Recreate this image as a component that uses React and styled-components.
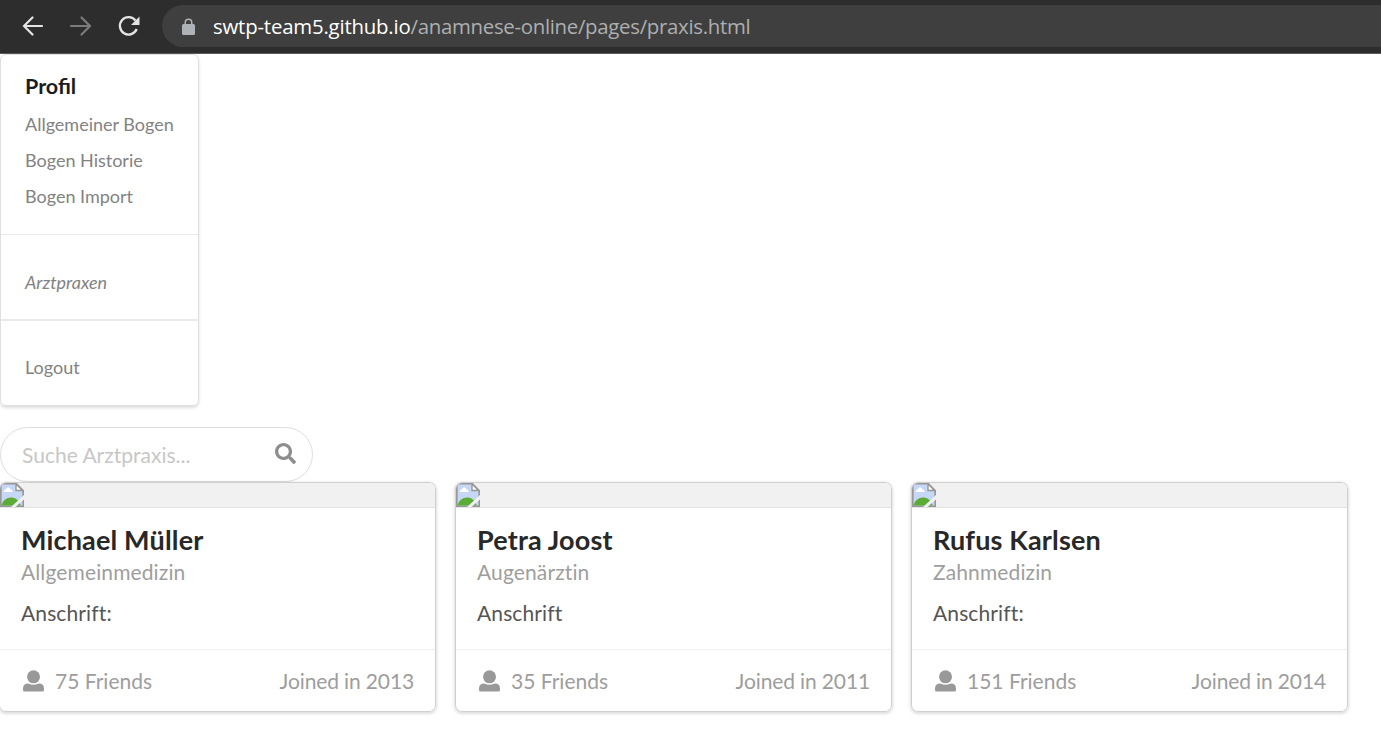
import React from 'react';
import styled, { createGlobalStyle } from 'styled-components';

const GlobalStyle = createGlobalStyle`
  *, *::before, *::after { box-sizing: border-box; }
  html, body { margin: 0; background: #fff; }
  body {
    min-height: 100vh;
    font-family: Lato, "Liberation Sans", sans-serif;
    font-size: 21px;
    color: rgba(0, 0, 0, 0.87);
  }
`;

const Toolbar = styled.header`
  display: flex;
  align-items: center;
  height: 54px;
  padding: 0 0 1px 20px;
  background: #2d2d2d;
  border-bottom: 1px solid #5a5a5a;
`;

const NavIcon = styled.svg`
  flex: none;
  width: 24px;
  height: 24px;
  margin-right: 24px;
  color: ${(p) => (p.$dim ? '#7b7b7b' : '#e4e4e4')};
`;

const AddressBar = styled.div`
  flex: 1;
  display: flex;
  align-items: center;
  height: 42px;
  margin-left: -2px;
  padding-left: 20px;
  border-radius: 21px 0 0 21px;
  background: #3f3f3f;
`;

const Lock = styled.svg`
  flex: none;
  width: 13px;
  height: 17px;
  margin-right: 18px;
  fill: #aeb1b6;
`;

const Url = styled.span`
  font: 20.4px/28px "Open Sans", "Noto Sans", sans-serif;
  letter-spacing: ${(p) => p.$spacing}px;
  color: ${(p) => (p.$path ? '#adafb1' : '#fff')};
  white-space: pre;
`;

const Menu = styled.nav`
  width: 199px;
  height: 352px;
  border: 1px solid #dedfdf;
  border-radius: 6px;
  box-shadow: 0 2px 3px rgba(34, 36, 38, 0.15);
`;

const MenuGroup = styled.div`
  display: flex;
  flex-direction: column;
  height: ${(p) => p.$height}px;
  padding: ${(p) => p.$top}px 24px 0;
  border-bottom: ${(p) => p.$line || 0}px solid #e9e9e9;
`;

const MenuTitle = styled.div`
  font-size: 21.5px;
  font-weight: 700;
  line-height: 26px;
  margin-bottom: 7px;
  color: #1b1c1d;
`;

const MenuLink = styled.a`
  font-size: 18px;
  line-height: 36px;
  color: #828282;
  font-style: ${(p) => (p.$italic ? 'italic' : 'normal')};
  white-space: nowrap;
`;

const Search = styled.label`
  display: flex;
  align-items: center;
  justify-content: space-between;
  width: 313px;
  height: 55px;
  margin-top: 21px;
  padding: 0 16.5px 0 21px;
  border: 1px solid #dedede;
  border-radius: 28px;
`;

const Placeholder = styled.span`
  color: #c7c7c7;
  line-height: 26px;
`;

const SearchGlyph = styled.svg`
  width: 21px;
  height: 21px;
  margin-bottom: 2px;
  fill: #8e8e8e;
`;

const Cards = styled.main`
  display: flex;
  gap: 19px;
  margin-left: -1px;
  padding-bottom: 20px;
  font-variant-ligatures: none;
`;

const Card = styled.article`
  flex: none;
  width: 437px;
  height: 230px;
  border: 1px solid #d0d0d1;
  border-radius: 7px;
  box-shadow: 0 1px 3px 1px rgba(0, 0, 0, 0.13);
  overflow: hidden;
`;

const CardImage = styled.div`
  height: 25px;
  background: #f1f1f1;
  border-bottom: 1px solid #e3e3e3;
`;

const BrokenImage = styled.svg`
  display: block;
  width: 24px;
  height: 24px;
`;

const CardBody = styled.div`
  height: 142px;
  padding: 17px 21px 0;
  border-bottom: 1px solid #efefef;
`;

const Name = styled.h2`
  margin: 0;
  font-size: 27px;
  font-weight: 700;
  line-height: 30px;
  letter-spacing: 0.16px;
  color: #282828;
`;

const Meta = styled.div`
  margin-top: 1px;
  line-height: 32px;
  letter-spacing: 0.12px;
  color: #9e9e9e;
`;

const Description = styled.div`
  margin-top: 9px;
  line-height: 32px;
  letter-spacing: 0.12px;
  color: #555;
`;

const CardExtra = styled.div`
  display: flex;
  align-items: center;
  justify-content: space-between;
  height: 60px;
  padding: 0 21px;
  color: #9d9d9d;
`;

const Friends = styled.span`
  display: flex;
  align-items: center;
  gap: 11px;
`;

const Joined = styled.span`
  letter-spacing: -0.13px;
`;

const UserGlyph = styled.svg`
  width: 21px;
  height: 22px;
  margin: 1px 0 0 2px;
  fill: #999;
`;

const practices = [
  { name: 'Michael Müller', field: 'Allgemeinmedizin', address: 'Anschrift:', friends: 75, year: 2013 },
  { name: 'Petra Joost', field: 'Augenärztin', address: 'Anschrift', friends: 35, year: 2011 },
  { name: 'Rufus Karlsen', field: 'Zahnmedizin', address: 'Anschrift:', friends: 151, year: 2014 },
];

function ArrowIcon({ right }) {
  return (
    <NavIcon $dim={right} viewBox="0 0 24 24" fill="none" stroke="currentColor" strokeWidth="2.2" strokeLinecap="round">
      <path d={right ? 'M3 12H21.500M13.500 3.500l8.500 8.500-8.500 8.500' : 'M22 12H4M12.500 3.500L4 12l8.500 8.500'} />
    </NavIcon>
  );
}

function ReloadIcon() {
  return (
    <NavIcon viewBox="0 0 24 24">
      <path d="M19.500 6.500A8.700 8.700 0 1 0 20.700 15" fill="none" stroke="currentColor" strokeWidth="2.3" />
      <path d="M23.500 2.500v8.500H15z" fill="currentColor" />
    </NavIcon>
  );
}

function PracticeCard({ name, field, address, friends, year }) {
  return (
    <Card>
      <CardImage>
        <BrokenImage viewBox="0 0 24 24">
          <path d="M.8 .8h15.700l6.700 6.700v15.700H.8z" fill="#c6d6f5" stroke="#979797" strokeWidth="1.6" />
          <path d="M3.500 9c0-2 1.500-2.500 2.500-2.500C6.500 3.500 10 3.500 10.500 6.500c1.500 0 2 1 2 2.500z" fill="#fff" />
          <path d="M1.600 22.500c2-10 16-11 19 0z" fill="#5aac35" />
          <path d="M16 1v6.500h6.500z" fill="#fff" stroke="#979797" strokeWidth="1.4" />
          <path d="M24 12v4.500L15.500 24H11z" fill="#f1f1f1" />
        </BrokenImage>
      </CardImage>
      <CardBody>
        <Name>{name}</Name>
        <Meta>{field}</Meta>
        <Description>{address}</Description>
      </CardBody>
      <CardExtra>
        <Friends>
          <UserGlyph viewBox="0 0 21 22">
            <circle cx="10.500" cy="6.800" r="6.500" />
            <path d="M5.500 13.500Q10.500 16 15.500 13.500Q21 13.500 21 18.500V20Q21 21.500 19.500 21.500H1.500Q0 21.500 0 20V18.500Q0 13.500 5.500 13.500Z" />
          </UserGlyph>
          <span>{friends} Friends</span>
        </Friends>
        <Joined>Joined in {year}</Joined>
      </CardExtra>
    </Card>
  );
}

export default function App() {
  return (
    <>
      <GlobalStyle />
      <Toolbar>
        <ArrowIcon />
        <ArrowIcon right />
        <ReloadIcon />
        <AddressBar>
          <Lock viewBox="0 0 13 17">
            <path d="M1.500 6H2.500V4.500a4 4 0 0 1 8 0V6H11.500Q13 6 13 7.500V15.500Q13 17 11.500 17H1.500Q0 17 0 15.500V7.500Q0 6 1.500 6ZM4 6H9V4.500a2.500 2.500 0 0 0-5 0Z" />
          </Lock>
          <Url $spacing={-0.2}>swtp-team5.github.io</Url>
          <Url $path $spacing={-0.3}>/anamnese-online/pages/praxis.html</Url>
        </AddressBar>
      </Toolbar>
      <Menu>
        <MenuGroup $height={180} $top={18} $line={1}>
          <MenuTitle>Profil</MenuTitle>
          <MenuLink>Allgemeiner Bogen</MenuLink>
          <MenuLink>Bogen Historie</MenuLink>
          <MenuLink>Bogen Import</MenuLink>
        </MenuGroup>
        <MenuGroup $height={86} $top={29} $line={2}>
          <MenuLink $italic>Arztpraxen</MenuLink>
        </MenuGroup>
        <MenuGroup $height={84} $top={28}>
          <MenuLink>Logout</MenuLink>
        </MenuGroup>
      </Menu>
      <Search>
        <Placeholder>Suche Arztpraxis...</Placeholder>
        <SearchGlyph viewBox="0 0 512 512">
          <path d="M505 442.700L405.300 343c-4.500-4.500-10.600-7-17-7H372c27.600-35.300 44-79.700 44-128C416 93.100 322.900 0 208 0S0 93.100 0 208s93.100 208 208 208c48.300 0 92.700-16.400 128-44v16.300c0 6.400 2.500 12.500 7 17l99.700 99.700c9.400 9.400 24.600 9.400 33.900 0l28.300-28.300c9.400-9.400 9.400-24.600.1-34zM208 336c-70.700 0-128-57.200-128-128 0-70.700 57.200-128 128-128 70.700 0 128 57.200 128 128 0 70.700-57.200 128-128 128z" />
        </SearchGlyph>
      </Search>
      <Cards>
        {practices.map((p) => (
          <PracticeCard key={p.name} {...p} />
        ))}
      </Cards>
    </>
  );
}
